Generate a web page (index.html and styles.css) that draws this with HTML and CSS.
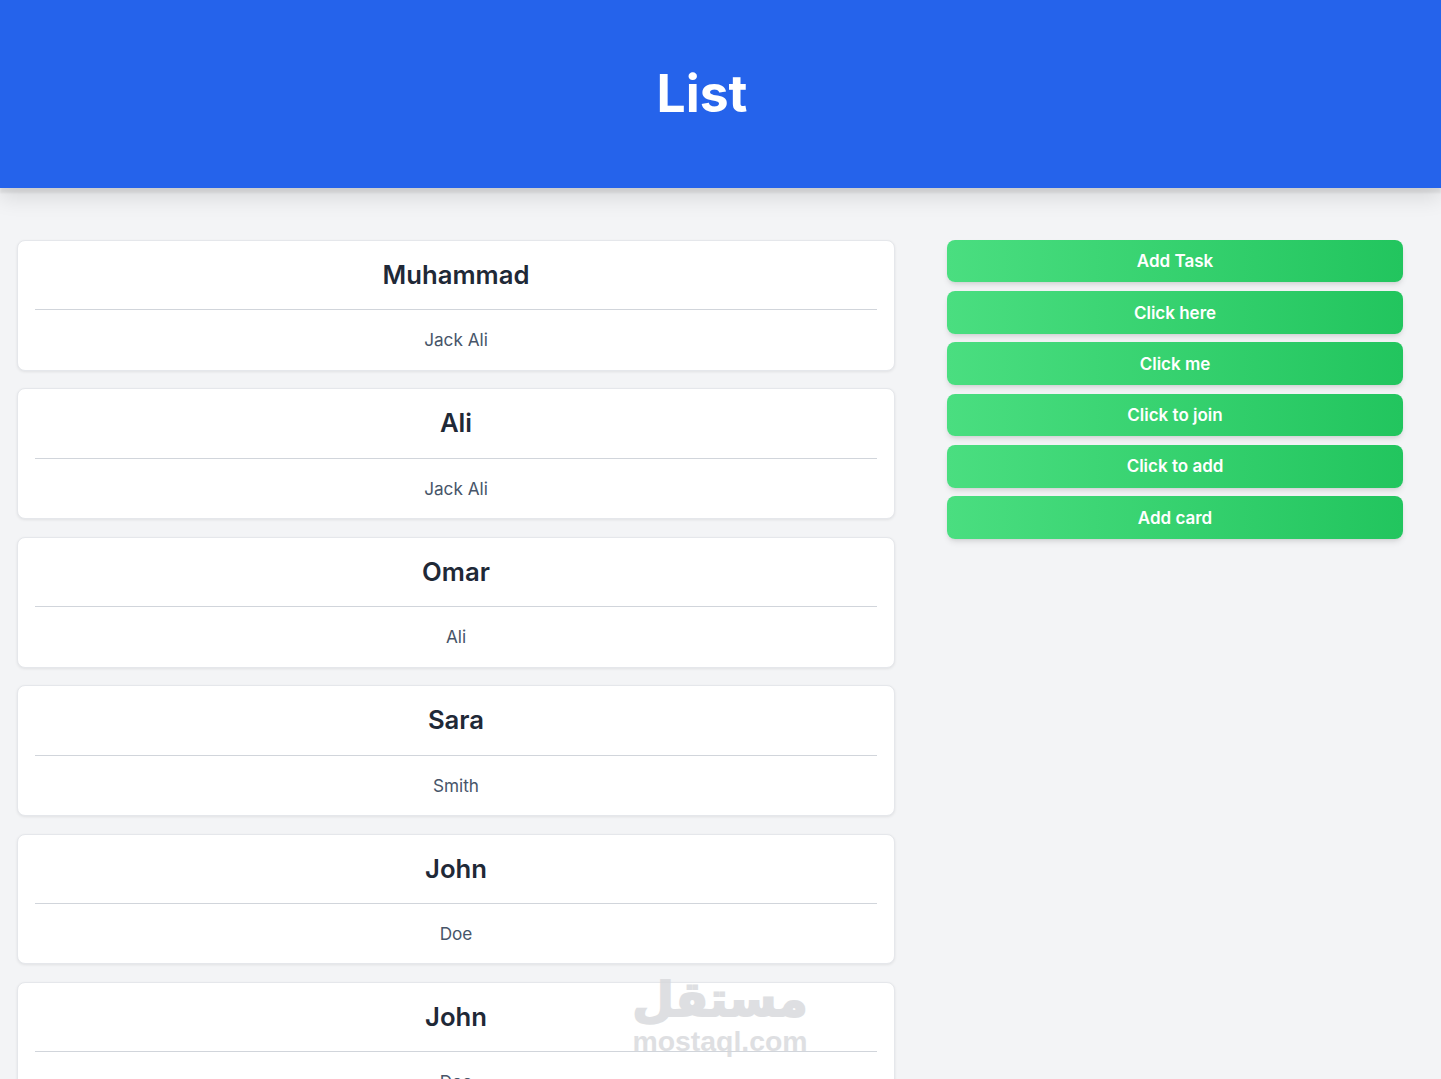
FILE: index.html
```html
<!DOCTYPE html>
<html lang="en">
<head>
<meta charset="utf-8">
<title>List</title>
<link rel="stylesheet" href="styles.css">
</head>
<body>
<header class="top"><h1 class="title">List</h1></header>
<main class="layout">
  <section class="cards">
    <article class="card"><h2 class="name">Muhammad</h2><p class="sub">Jack Ali</p></article>
    <article class="card"><h2 class="name">Ali</h2><p class="sub">Jack Ali</p></article>
    <article class="card"><h2 class="name">Omar</h2><p class="sub">Ali</p></article>
    <article class="card"><h2 class="name">Sara</h2><p class="sub">Smith</p></article>
    <article class="card"><h2 class="name">John</h2><p class="sub">Doe</p></article>
    <article class="card"><h2 class="name">John</h2><p class="sub">Doe</p></article>
  </section>
  <aside class="actions">
    <button class="btn">Add Task</button>
    <button class="btn">Click here</button>
    <button class="btn">Click me</button>
    <button class="btn">Click to join</button>
    <button class="btn">Click to add</button>
    <button class="btn">Add card</button>
  </aside>
</main>
<div class="mark"><span class="mark-ar" lang="ar" dir="rtl">مستقل</span><span class="mark-en">mostaql.com</span></div>
</body>
</html>
```
FILE: styles.css
```css
* { box-sizing: border-box; }
html, body { height: 100%; }
body {
  margin: 0;
  height: 1079px;
  overflow: hidden;
  background: #f3f4f6;
  font-family: Inter, "Liberation Sans", sans-serif;
  position: relative;
}
.top {
  height: 188px;
  background: #2563eb;
  box-shadow: 0 5px 2px rgba(0,0,0,.07), 0 10px 20px rgba(0,0,0,.11);
  display: flex;
  align-items: center;
  justify-content: center;
  padding-right: 37px;
}
.title {
  margin: 0;
  color: #fff;
  font-size: 51.6px;
  line-height: 1;
  font-weight: 700;
}
.layout {
  display: flex;
  align-items: flex-start;
  padding: 51.8px 38px 0 17px;
  gap: 52px;
}
.cards {
  width: 878px;
  flex: none;
  margin-top: .2px;
  display: flex;
  flex-direction: column;
  gap: 17.6px;
}
.card {
  background: #fff;
  border: 1px solid #e5e7eb;
  border-radius: 8px;
  box-shadow: 0 1px 3px rgba(0,0,0,.08);
  padding: 17px;
  height: 130.8px;
  flex: none;
  text-align: center;
}
.name {
  margin: 0;
  font-size: 25.7px;
  line-height: 34px;
  font-weight: 600;
  color: #1f2937;
  padding-bottom: 17.4px;
  border-bottom: 1px solid #d1d5db;
}
.sub {
  margin: 0;
  padding-top: 18px;
  font-size: 17.2px;
  line-height: 24px;
  color: #475569;
}
.actions {
  flex: 1;
  display: flex;
  flex-direction: column;
  gap: 8.7px;
}
.btn {
  height: 42.6px;
  padding: .4px 0 0;
  border: 0;
  border-radius: 8px;
  background: linear-gradient(to right, #4ade80, #22c55e);
  box-shadow: 0 4px 6px -1px rgba(0,0,0,.1), 0 2px 4px -2px rgba(0,0,0,.1);
  color: #fff;
  font-family: inherit;
  font-size: 17px;
  font-weight: 600;
}
.mark {
  position: absolute;
  left: 620px;
  top: 970px;
  width: 200px;
  display: flex;
  flex-direction: column;
  align-items: center;
  color: #d6d7da;
  opacity: .78;
  pointer-events: none;
}
.mark-ar {
  font-family: "DejaVu Sans", sans-serif;
  font-size: 48px;
  line-height: 58px;
  font-weight: 700;
  -webkit-text-stroke: 2px #d6d7da;
}
.mark-en {
  font-family: "Liberation Sans", sans-serif;
  font-size: 28.4px;
  line-height: 26px;
  font-weight: 700;
}
```
